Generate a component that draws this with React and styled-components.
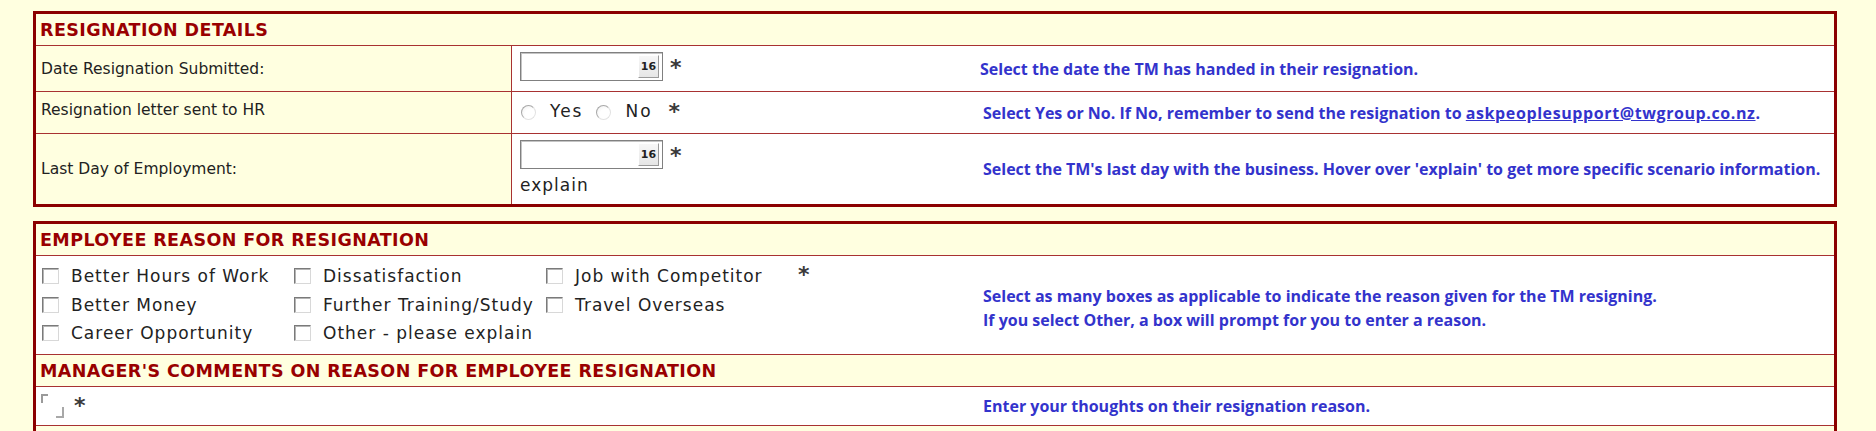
import React from "react"
import styled, { createGlobalStyle } from "styled-components"

const colors = {
	page: "#FFFFE0",
	frame: "#8B0000",
	line: "#A83232",
	head: "#990000",
	text: "#222222",
	help: "#3333CC",
}

const GlobalStyle = createGlobalStyle`
	html, body {
		margin: 0;
		background: ${colors.page};
	}
	body {
		font-family: "DejaVu Sans", Verdana, sans-serif;
	}
`

const reasons = [
	"Better Hours of Work",
	"Dissatisfaction",
	"Job with Competitor",
	"Better Money",
	"Further Training/Study",
	"Travel Overseas",
	"Career Opportunity",
	"Other - please explain",
]

export default function App() {
	return (
		<Page>
			<GlobalStyle />
			<Panel>
				<SectionHead>RESIGNATION DETAILS</SectionHead>
				<DetailRow height={46}>
					<Label>Date Resignation Submitted:</Label>
					<Field>
						<Inline>
							<DateBox><CalButton>16</CalButton></DateBox>
							<Asterisk>*</Asterisk>
						</Inline>
					</Field>
					<Help shift={10}>Select the date the TM has handed in their resignation.</Help>
				</DetailRow>
				<DetailRow height={42}>
					<Label top>Resignation letter sent to HR</Label>
					<Field top>
						<Inline>
							<Radio /><OptionText>Yes</OptionText>
							<Radio /><OptionText>No</OptionText>
							<Asterisk gap={16} lift>*</Asterisk>
						</Inline>
					</Field>
					<Help>
						Select Yes or No. If No, remember to send the resignation to&nbsp;
						<MailLink href="mailto:askpeoplesupport@twgroup.co.nz">askpeoplesupport@twgroup.co.nz</MailLink>.
					</Help>
				</DetailRow>
				<DetailRow height={70}>
					<Label>Last Day of Employment:</Label>
					<Field>
						<Inline>
							<DateBox><CalButton>16</CalButton></DateBox>
							<Asterisk>*</Asterisk>
						</Inline>
						<Explain>explain</Explain>
					</Field>
					<Help>Select the TM's last day with the business. Hover over 'explain' to get more specific scenario information.</Help>
				</DetailRow>
			</Panel>

			<Panel>
				<SectionHead>EMPLOYEE REASON FOR RESIGNATION</SectionHead>
				<WideRow height={99}>
					<Checks>
						<ReasonGrid>
							{reasons.map(r => (
								<Reason key={r}>
									<CheckBox />
									<span>{r}</span>
								</Reason>
							))}
						</ReasonGrid>
						<Asterisk gap={4} lift>*</Asterisk>
					</Checks>
					<Help drop={5}>
						Select as many boxes as applicable to indicate the reason given for the TM resigning.<br />
						If you select Other, a box will prompt for you to enter a reason.
					</Help>
				</WideRow>
				<SectionHead>MANAGER'S COMMENTS ON REASON FOR EMPLOYEE RESIGNATION</SectionHead>
				<WideRow height={39}>
					<Comment>
						<TinyArea />
						<Asterisk gap={9} lift>*</Asterisk>
					</Comment>
					<Help>Enter your thoughts on their resignation reason.</Help>
				</WideRow>
				<SectionHead />
			</Panel>
		</Page>
	)
}

const Page = styled.div`
	padding: 11px 39px 0 33px;
`

const Panel = styled.section`
	border: 3px solid ${colors.frame};
	background: #fff;
	& + & {
		margin-top: 14px;
	}
`

const SectionHead = styled.div`
	height: 31px;
	display: flex;
	align-items: center;
	padding-left: 4px;
	background: ${colors.page};
	border-bottom: 1px solid ${colors.line};
	color: ${colors.head};
	font-weight: bold;
	font-size: 17.5px;
	letter-spacing: 0.4px;
	&:last-child {
		border-bottom: none;
	}
`

const DetailRow = styled.div`
	display: grid;
	grid-template-columns: 476px 458px 1fr;
	height: ${p => p.height}px;
	box-sizing: border-box;
	border-bottom: 1px solid ${colors.line};
	&:last-child {
		border-bottom: none;
	}
`

const WideRow = styled.div`
	display: grid;
	grid-template-columns: 934px 1fr;
	height: ${p => p.height}px;
	box-sizing: border-box;
	border-bottom: 1px solid ${colors.line};
`

const Label = styled.div`
	background: ${colors.page};
	border-right: 1px solid ${colors.line};
	display: flex;
	align-items: ${p => (p.top ? "flex-start" : "center")};
	padding: ${p => (p.top ? "9px" : "0")} 0 0 5px;
	font-size: 15.5px;
	color: ${colors.text};
`

const Field = styled.div`
	display: flex;
	flex-direction: column;
	align-items: flex-start;
	padding: ${p => (p.top ? "7px" : "6px")} 0 0 8px;
	font-size: 17px;
	letter-spacing: 1px;
	color: ${colors.text};
`

const Inline = styled.div`
	display: flex;
	align-items: center;
`

const Help = styled.div`
	align-self: center;
	margin-top: ${p => p.drop || 0}px;
	padding-left: ${p => p.shift || 13}px;
	font-family: "Open Sans", "Noto Sans", sans-serif;
	font-weight: bold;
	font-size: 16px;
	line-height: 24px;
	color: ${colors.help};
	white-space: nowrap;
`

const MailLink = styled.a`
	color: ${colors.help};
	text-decoration: underline;
	letter-spacing: 0.6px;
`

const DateBox = styled.div`
	width: 143px;
	height: 29px;
	box-sizing: border-box;
	border: 1px solid #808080;
	box-shadow: inset 1px 1px 0 #c4c4c4;
	background: #fff;
	display: flex;
	justify-content: flex-end;
	align-items: center;
	padding-right: 3px;
`

const CalButton = styled.span`
	width: 21px;
	height: 23px;
	box-sizing: border-box;
	border: 1px solid;
	border-color: #ffffff #9a9a9a #9a9a9a #ffffff;
	background: linear-gradient(#f7f7f7, #e6e6e6);
	font-size: 11px;
	font-weight: bold;
	letter-spacing: 0;
	line-height: 21px;
	text-align: center;
	color: #222;
`

const Asterisk = styled.span`
	font-size: 22px;
	font-weight: bold;
	letter-spacing: 0;
	line-height: 22px;
	height: 22px;
	color: #3a3a3a;
	margin-left: ${p => (p.gap !== undefined ? p.gap : 7)}px;
	align-self: flex-start;
	margin-top: ${p => (p.lift ? 2 : 5)}px;
`

const Radio = styled.span`
	width: 15px;
	height: 15px;
	box-sizing: border-box;
	border-radius: 50%;
	border: 1px solid;
	border-color: #a8a8a8 #e2e2e2 #e2e2e2 #a8a8a8;
	background: radial-gradient(circle at 65% 65%, #ffffff 45%, #eeeeee 100%);
	margin: 2px 14px 0 1px;
	flex: none;
	& ~ & {
		margin-left: 13px;
	}
`

const OptionText = styled.span`
	line-height: 22px;
	letter-spacing: 2px;
`

const Explain = styled.span`
	margin-top: 6px;
`

const Checks = styled.div`
	display: flex;
	align-items: flex-start;
	padding: 6px 0 0 6px;
`

const ReasonGrid = styled.div`
	display: grid;
	grid-template-columns: 252px 252px 248px;
	grid-auto-rows: 28.5px;
`

const Reason = styled.label`
	display: flex;
	align-items: center;
	gap: 12px;
	font-size: 17px;
	letter-spacing: 1px;
	color: ${colors.text};
	white-space: nowrap;
`

const CheckBox = styled.span`
	width: 17px;
	height: 16px;
	box-sizing: border-box;
	border: 1px solid;
	border-color: #7a7a7a #d8d8d8 #d8d8d8 #7a7a7a;
	box-shadow: inset 1px 1px 0 #b4b4b4;
	background: #fff;
	flex: none;
`

const Comment = styled.div`
	display: flex;
	align-items: flex-start;
	padding: 6px 0 0 5px;
`

const TinyArea = styled.span`
	position: relative;
	width: 24px;
	height: 25px;
	&::before {
		content: "";
		position: absolute;
		left: 0;
		top: 1px;
		width: 5px;
		height: 7px;
		border-top: 2px solid #9a9a9a;
		border-left: 2px solid #9a9a9a;
	}
	&::after {
		content: "";
		position: absolute;
		left: 15px;
		top: 14px;
		width: 6px;
		height: 9px;
		border-right: 2px solid #a8a8a8;
		border-bottom: 2px solid #a8a8a8;
	}
`
